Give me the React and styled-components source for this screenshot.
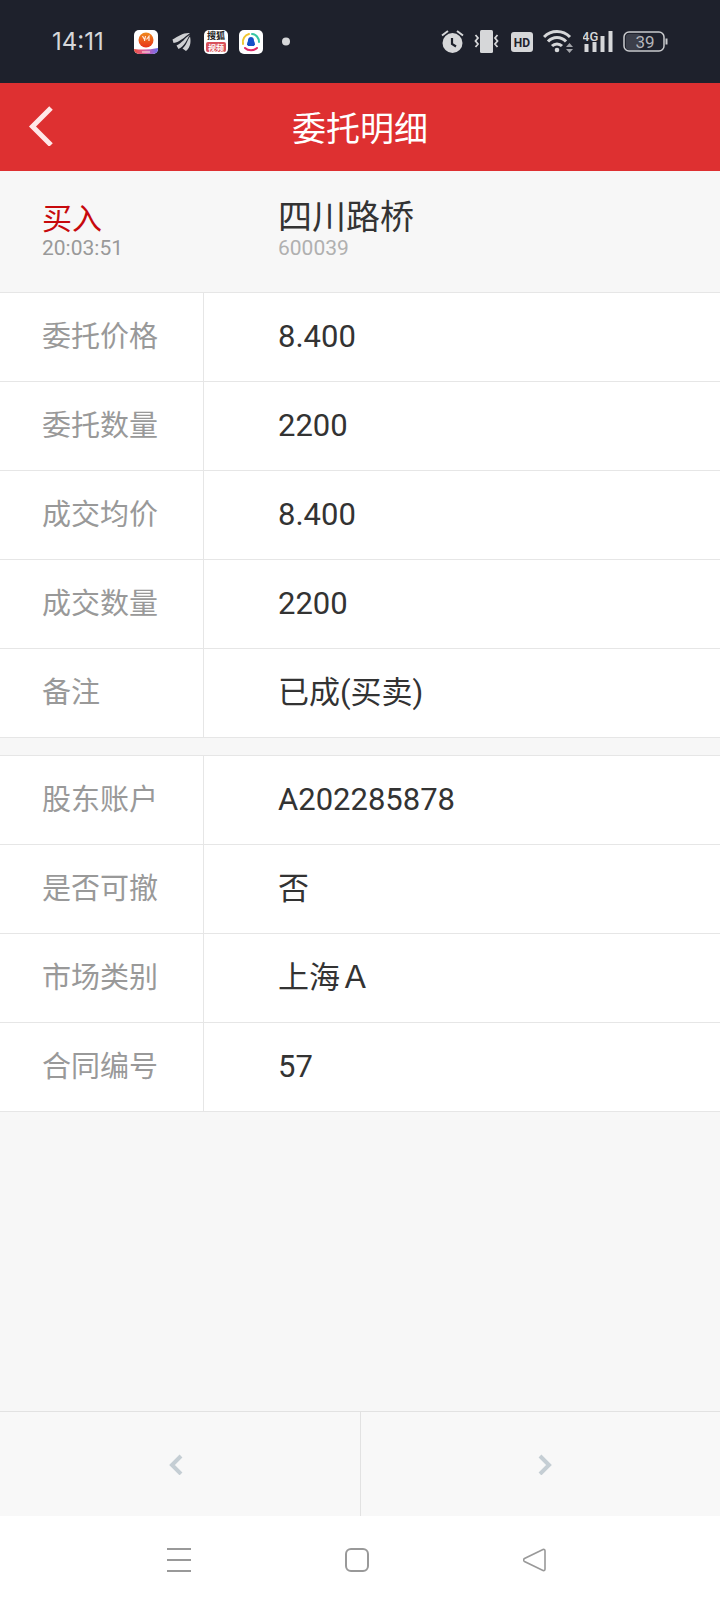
import React, { useState } from "react";
import styled, { createGlobalStyle } from "styled-components";

const orderRows = [
  { label: "委托价格", value: "8.400" },
  { label: "委托数量", value: "2200" },
  { label: "成交均价", value: "8.400" },
  { label: "成交数量", value: "2200" },
  { label: "备注", value: "已成(买卖)" },
];

const accountRows = [
  { label: "股东账户", value: "A202285878" },
  { label: "是否可撤", value: "否" },
  { label: "市场类别", value: "上海Ａ" },
  { label: "合同编号", value: "57" },
];

const StatusIcons = () => (
  <StatusGroup>
    {/* alarm */}
    <svg width="23" height="26" viewBox="0 0 23 26">
      <path d="M1 6.500L7 2M22 6.500L16 2" stroke="#d6d7d9" strokeWidth="2" />
      <circle cx="11.500" cy="14" r="10" fill="#d6d7d9" />
      <path d="M11 9v6l4 2.500" fill="none" stroke="#1e212c" strokeWidth="2.200" />
    </svg>
    {/* vibrate */}
    <svg width="25" height="26" viewBox="0 0 25 26">
      <rect x="6" y="1" width="13" height="23" rx="1.500" fill="#d6d7d9" />
      <path
        d="M1.500 6l2.500 3-2.500 3 2.500 3-2.500 3M23.500 6l-2.500 3 2.500 3-2.500 3 2.500 3"
        fill="none"
        stroke="#d6d7d9"
        strokeWidth="1.800"
      />
    </svg>
    <svg width="24" height="26" viewBox="0 0 24 26">
      <rect x="2" y="3" width="22" height="20" rx="3" fill="#d6d7d9" />
      <text
        x="13"
        y="17.500"
        textAnchor="middle"
        fontFamily="Roboto, sans-serif"
        fontWeight="700"
        fontSize="12"
        fill="#1e212c"
      >
        HD
      </text>
    </svg>
    {/* wifi */}
    <svg width="30" height="26" viewBox="0 0 30 26">
      <g fill="none" stroke="#d6d7d9" strokeWidth="3">
        <path d="M1 8a18 18 0 0 1 26 0" />
        <path d="M5 12.500a12 12 0 0 1 18 0" />
        <path d="M9 17a7 7 0 0 1 10 0" />
      </g>
      <circle cx="14" cy="21" r="2.300" fill="#d6d7d9" />
      <path d="M23 18l3.500-4 3.500 4zM23 20l3.500 4 3.500-4z" fill="#a3a5aa" />
    </svg>
    <svg width="30" height="26" viewBox="0 0 30 26">
      <path
        d="M1.500 15h4v8h-4zM9.500 13h4v10h-4zM17.500 7h4v16h-4zM25.500 2h4v21h-4z"
        fill="#d6d7d9"
      />
      <text
        x="-1"
        y="11.500"
        fontFamily="Roboto, sans-serif"
        fontWeight="500"
        fontSize="13"
        fill="#d6d7d9"
        stroke="#1e212c"
        strokeWidth="2"
        paintOrder="stroke"
      >
        4G
      </text>
    </svg>
    <svg width="45" height="26" viewBox="0 0 45 26">
      <rect x="3" y="5" width="15" height="16" rx="3" fill="#3c3f4a" />
      <rect
        x="1"
        y="3"
        width="40"
        height="19"
        rx="5"
        fill="none"
        stroke="#c9cacd"
        strokeWidth="1.500"
      />
      <path d="M43.500 9.500v6" stroke="#c9cacd" strokeWidth="2" />
      <text
        x="22"
        y="18.500"
        textAnchor="middle"
        fontFamily="Roboto, sans-serif"
        fontSize="17"
        fill="#b4b5b9"
      >
        39
      </text>
    </svg>
  </StatusGroup>
);

const NoticeIcons = () => (
  <NoticeGroup>
    <svg width="24" height="24" viewBox="0 0 24 24">
      <defs>
        <linearGradient id="sun" x1="0" y1="0" x2="0" y2="1">
          <stop offset="0" stopColor="#f08a1c" />
          <stop offset="1" stopColor="#e8331a" />
        </linearGradient>
        <linearGradient id="band" x1="0" y1="0" x2="1" y2="0">
          <stop offset="0" stopColor="#f0503c" />
          <stop offset="0.500" stopColor="#d85fa8" />
          <stop offset="1" stopColor="#6a6cf0" />
        </linearGradient>
      </defs>
      <rect width="24" height="24" rx="5" fill="#fff" />
      <path d="M0 19q12 1.500 24-1v1a5 5 0 0 1-5 5H5a5 5 0 0 1-5-5z" fill="url(#band)" />
      <circle cx="12" cy="10" r="7.500" fill="url(#sun)" />
      <path
        d="M8.500 6l2 3.500M11.500 6l-1 5M12.500 9.500l3-4M15 6v5M8 22h8"
        fill="none"
        stroke="#ffe9dc"
        strokeWidth="1.200"
      />
    </svg>
    {/* feather */}
    <svg width="24" height="24" viewBox="0 0 24 24">
      <g fill="#cfd0d3">
        <path d="M21 3C14 2.500 9 6.500 3.500 9.500L4.500 13C11 12 15 7.500 21 3z" />
        <path d="M21 4.500C16 8 13 13 7.500 15.500l2 3.500C16 16 17.500 10 21 4.500z" />
        <path d="M21 6.500c-3 4-3 8-7.500 12l3.500 2.500C22 17 22 11 21 6.500z" />
      </g>
    </svg>
    <svg width="24" height="24" viewBox="0 0 24 24">
      <rect width="24" height="24" rx="5" fill="#fff" />
      <rect x="2" y="12" width="20" height="10" rx="2" fill="#d8515b" />
      <g fontFamily='"Noto Sans CJK SC", sans-serif' fontWeight="700" textAnchor="middle">
        <text x="12" y="9" fontSize="9" fill="#222">
          搜狐
        </text>
        <text x="12" y="21" fontSize="8" fill="#fff">
          视频
        </text>
      </g>
    </svg>
    <svg width="24" height="24" viewBox="0 0 24 24">
      <rect width="24" height="24" rx="5" fill="#fff" />
      <g fill="none" strokeWidth="2" strokeLinecap="round">
        <path d="M4 14C3 9 6 5 10 4" stroke="#f0c52e" />
        <path d="M13 4c4 0 7 4 7 8" stroke="#37c6a4" />
        <path d="M6 18c3 3 9 3 12 0" stroke="#dd2a68" />
      </g>
      <path
        d="M12 7c3 0 3 3 3 4 1 2 1 3 1 4-1 0-1 1-1 1H9s0-1-1-1c0-1 0-2 1-4 0-1 0-4 3-4z"
        fill="#1550c8"
      />
    </svg>
    <svg width="24" height="24" viewBox="0 0 24 24">
      <circle cx="12" cy="11.500" r="4" fill="#d6d7d9" />
    </svg>
  </NoticeGroup>
);

const DetailTable = ({ rows, name }) => (
  <Table aria-label={name}>
    <tbody>
      {rows.map((row) => (
        <tr key={row.label}>
          <LabelCell scope="row">{row.label}</LabelCell>
          <ValueCell>{row.value}</ValueCell>
        </tr>
      ))}
    </tbody>
  </Table>
);

function App() {
  const [page, setPage] = useState(0);

  return (
    <Container>
      <GlobalStyle />
      <StatusBar>
        <Clock>14:11</Clock>
        <NoticeIcons />
        <StatusIcons />
      </StatusBar>

      <Header>
        <BackButton aria-label="返回">
          <svg width="26" height="40" viewBox="0 0 26 40">
            <path d="M24 2L5.500 20.500 24 39" fill="none" stroke="#ffe8e8" strokeWidth="5" />
          </svg>
        </BackButton>
        <HeaderTitle>委托明细</HeaderTitle>
      </Header>

      <Main>
        <Summary>
          <Side>买入</Side>
          <StockName>四川路桥</StockName>
          <Time>20:03:51</Time>
          <StockCode>600039</StockCode>
        </Summary>
        <Tables>
          <DetailTable rows={orderRows} name="委托" />
          <DetailTable rows={accountRows} name="账户" />
        </Tables>
      </Main>

      <Pager>
        <PrevButton aria-label="上一条" onClick={() => setPage(page - 1)}>
          <svg width="14" height="22" viewBox="0 0 14 22">
            <path d="M12 3l-9 9 9 9" fill="none" stroke="#c5ced4" strokeWidth="4" />
          </svg>
        </PrevButton>
        <NextButton aria-label="下一条" onClick={() => setPage(page + 1)}>
          <svg width="14" height="22" viewBox="0 0 14 22">
            <path d="M2 3l9 9-9 9" fill="none" stroke="#c5ced4" strokeWidth="4" />
          </svg>
        </NextButton>
      </Pager>

      <SystemNav>
        <NavButton aria-label="菜单">
          <svg width="24" height="24" viewBox="0 0 24 24">
            <path d="M0 1h24M0 12h24M0 23h24" stroke="#999" strokeWidth="2" />
          </svg>
        </NavButton>
        <NavButton aria-label="主页">
          <svg width="24" height="24" viewBox="0 0 24 24">
            <rect x="1" y="1" width="22" height="22" rx="5" fill="none" stroke="#999" strokeWidth="2" />
          </svg>
        </NavButton>
        <NavButton aria-label="后退">
          <svg width="24" height="24" viewBox="0 0 24 24">
            <path
              d="M20 1.500L1.500 10.500q-2 1.500 0 3L20 22.500q2 .5 2-1.500V3q0-2-2-1.500z"
              fill="none"
              stroke="#999"
              strokeWidth="1.600"
            />
          </svg>
        </NavButton>
      </SystemNav>
    </Container>
  );
}

export default App;

const GlobalStyle = createGlobalStyle`
  * {
    box-sizing: border-box;
  }

  body {
    margin: 0;
    font-family: Roboto, "Noto Sans CJK SC", sans-serif;
  }

  button {
    display: flex;
    align-items: center;
    justify-content: center;
    padding: 0;
    border: none;
    background: none;
    cursor: pointer;
  }

  svg {
    display: block;
    flex-shrink: 0;
  }
`;

const Container = styled.div`
  display: flex;
  flex-direction: column;
  min-height: 100vh;
  background-color: #f7f7f7;
`;

const StatusBar = styled.div`
  display: flex;
  align-items: center;
  height: 83px;
  padding: 0 52px;
  background-color: #1e212c;
`;

const Clock = styled.span`
  min-width: 82px;
  font-family: Inter, sans-serif;
  font-size: 24px;
  color: #d6d7d9;
`;

const NoticeGroup = styled.div`
  display: flex;
  align-items: center;
  gap: 11px;
`;

const StatusGroup = styled.div`
  display: flex;
  align-items: center;
  gap: 10px;
  margin-left: auto;
`;

const Header = styled.header`
  display: grid;
  grid-template-columns: 80px 1fr 80px;
  align-items: center;
  height: 88px;
  padding-bottom: 2px;
  background-color: #de3031;
`;

const BackButton = styled.button`
  height: 86px;
`;

const HeaderTitle = styled.h1`
  margin: 0;
  text-align: center;
  font-size: 34px;
  font-weight: 400;
  color: #fff;
`;

const Main = styled.main`
  flex: 1;
`;

const Summary = styled.section`
  display: grid;
  grid-template-columns: 204px 1fr;
  align-items: baseline;
  padding: 27px 0 34px;
`;

const Side = styled.span`
  padding-left: 42px;
  font-size: 30px;
  line-height: 38px;
  color: #c7090c;
`;

const StockName = styled.span`
  padding-left: 74px;
  font-size: 34px;
  line-height: 38px;
  color: #333;
`;

const Time = styled.time`
  padding-left: 42px;
  font-size: 21px;
  line-height: 20px;
  color: #999;
`;

const StockCode = styled.span`
  padding-left: 74px;
  font-size: 21px;
  line-height: 20px;
  color: #b0b0b0;
`;

const Tables = styled.div`
  display: flex;
  flex-direction: column;
  gap: 17px;
`;

const Table = styled.table`
  width: 100%;
  border-spacing: 0;
  border-top: 1px solid #e6e6e6;
  background-color: #fff;
`;

const LabelCell = styled.th`
  width: 204px;
  height: 89px;
  padding: 0 0 0 42px;
  border-right: 1px solid #e6e6e6;
  border-bottom: 1px solid #e6e6e6;
  text-align: left;
  font-size: 29px;
  font-weight: 400;
  line-height: 40px;
  color: #999;
`;

const ValueCell = styled.td`
  padding: 0 0 0 74px;
  border-bottom: 1px solid #e6e6e6;
  font-size: 31px;
  line-height: 40px;
  color: #333;
`;

const Pager = styled.nav`
  display: grid;
  grid-template-columns: 1fr 1fr;
  height: 105px;
  border-top: 1px solid #e2e2e2;
  background-color: #f8f8f8;
`;

const PrevButton = styled.button`
  && {
    padding-right: 8px;
  }
`;

const NextButton = styled.button`
  && {
    padding-left: 8px;
    border-left: 1px solid #e2e2e2;
  }
`;

const SystemNav = styled.nav`
  display: grid;
  grid-template-columns: repeat(3, 1fr);
  height: 88px;
  padding: 0 96px 0 90px;
  background-color: #fff;
`;

const NavButton = styled.button`
  height: 88px;
`;
